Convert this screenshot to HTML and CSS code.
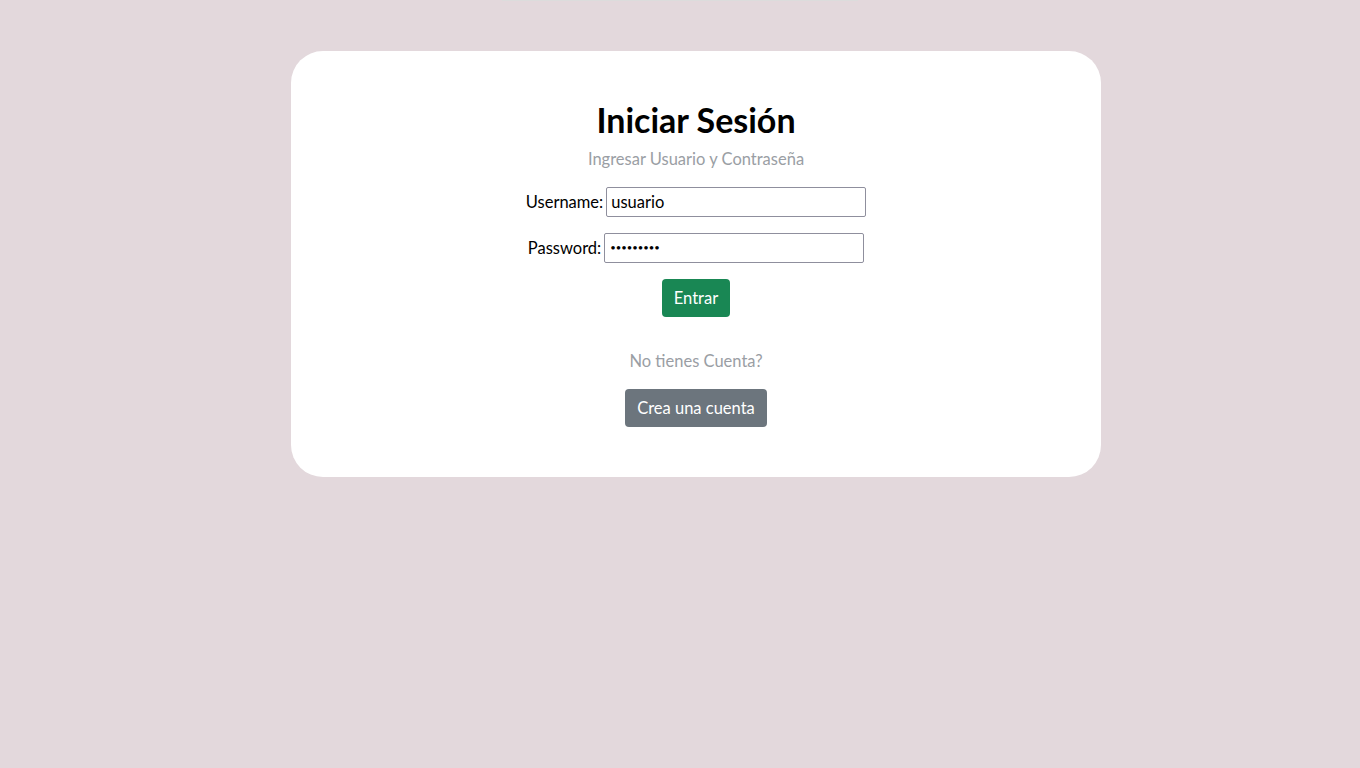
FILE: index.html
```html
<!DOCTYPE html>
<html lang="es">
<head>
<meta charset="utf-8">
<title>Iniciar Sesión</title>
<link rel="stylesheet" href="styles.css">
</head>
<body>
<div class="page">
  <div class="topline"></div>
  <main class="card">
    <h1 class="title">Iniciar Sesión</h1>
    <p class="subtitle">Ingresar Usuario y Contraseña</p>
    <form class="form">
      <div class="row">
        <label for="u">Username:</label>
        <input id="u" class="field" type="text" value="usuario">
      </div>
      <div class="row">
        <label for="p">Password:</label>
        <input id="p" class="field field-pass" type="password" value="123456789">
      </div>
      <button type="button" class="btn btn-success">Entrar</button>
    </form>
    <p class="note">No tienes Cuenta?</p>
    <button type="button" class="btn btn-secondary">Crea una cuenta</button>
  </main>
</div>
</body>
</html>
```

FILE: styles.css
```css
html, body {
  margin: 0;
  padding: 0;
  background: #e3d8dc;
  font-family: Lato, "Liberation Sans", sans-serif;
  font-size: 16.5px;
  color: #000;
}
.page {
  display: flex;
  flex-direction: column;
  align-items: center;
  min-height: 768px;
}
.topline {
  width: 356px;
  height: 1px;
  background: #dcdcdc;
}
.card {
  margin-top: 50px;
  margin-left: 32px;
  width: 810px;
  box-sizing: border-box;
  background: #fff;
  border-radius: 32px;
  padding: 49px 0 50px;
  display: flex;
  flex-direction: column;
  align-items: center;
}
.title {
  margin: 0;
  font-size: 34px;
  font-weight: 700;
  line-height: 1.2;
}
.subtitle {
  margin: 6px 0 0;
  color: #9a9ea4;
  line-height: 24px;
}
.form {
  margin-top: 16px;
  display: flex;
  flex-direction: column;
  align-items: center;
  gap: 16px;
}
.row {
  display: flex;
  align-items: center;
  gap: 3px;
}
.field {
  width: 260px;
  height: 30px;
  box-sizing: border-box;
  border: 1px solid #8f8f9d;
  border-radius: 2px;
  padding: 0 4px;
  font-family: inherit;
  font-size: 16.5px;
  color: #000;
  background: #fff;
  outline: none;
}
.field-pass {
  font-size: 9.5px;
  padding: 0 5px;
}
.btn {
  border: none;
  border-radius: 4px;
  padding: 7px 12px;
  font-family: inherit;
  font-size: 16.5px;
  line-height: 24px;
  color: #fff;
  cursor: pointer;
}
.btn-success {
  background: #198754;
}
.btn-secondary {
  background: #6c757d;
}
.note {
  margin: 32px 0 16px;
  color: #9a9ea4;
  line-height: 24px;
}
```
